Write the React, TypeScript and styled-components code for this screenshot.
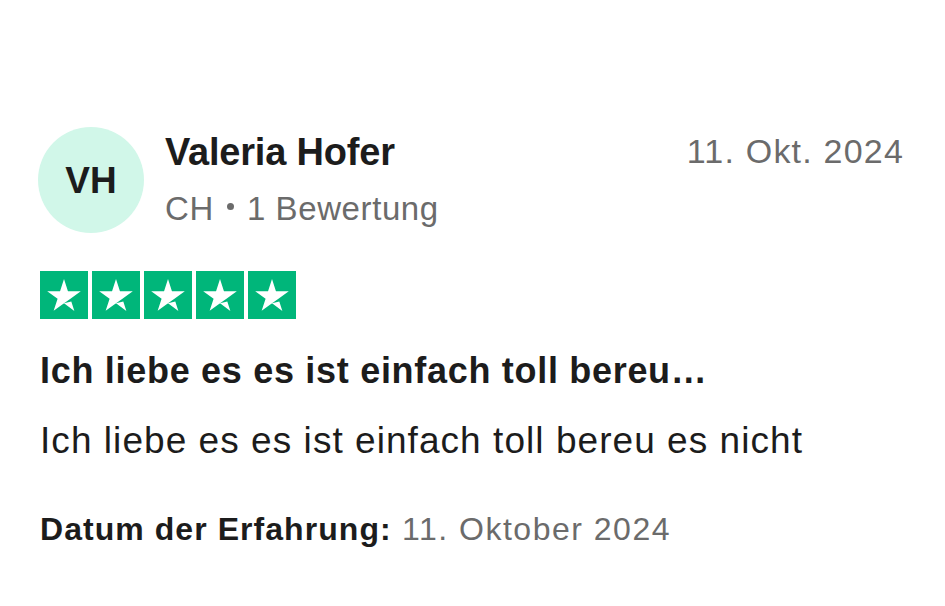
import React from "react";
import styled, { createGlobalStyle } from "styled-components";

const GlobalStyle = createGlobalStyle`
  html, body {
    margin: 0;
    padding: 0;
    background: #ffffff;
  }
  body {
    font-family: "Liberation Sans", Arial, Helvetica, sans-serif;
    color: #1c1c1c;
  }
`;

const ReviewCard = styled.article`
  width: 945px;
  height: 606px;
  box-sizing: border-box;
  padding: 127px 41px 0 40px;
  display: flex;
  flex-direction: column;
`;

const Header = styled.header`
  display: flex;
  align-items: flex-start;
`;

const Avatar = styled.div`
  width: 106px;
  height: 106px;
  margin-left: -2px;
  border-radius: 50%;
  background: #d1f7e9;
  display: flex;
  align-items: center;
  justify-content: center;
  font-size: 37px;
  font-weight: 700;
  line-height: 1;
  color: #1c1c1c;
  flex-shrink: 0;
`;

const Consumer = styled.div`
  display: flex;
  flex-direction: column;
  gap: 21px;
  margin: 6px 0 0 21px;
  flex: 1;
`;

const Name = styled.div`
  font-size: 38px;
  font-weight: 700;
  line-height: 1;
  letter-spacing: -0.2px;
`;

const Meta = styled.div`
  display: flex;
  align-items: center;
  font-size: 33px;
  line-height: 1;
  color: #6b6b6b;
  letter-spacing: 0.6px;
`;

const Dot = styled.span`
  display: inline-block;
  width: 7px;
  height: 7px;
  border-radius: 50%;
  background: #6b6b6b;
  margin: 0 13px 5px 13px;
`;

const PublishedDate = styled.time`
  margin-top: 7px;
  font-size: 34px;
  line-height: 1;
  color: #6b6b6b;
  letter-spacing: 1.2px;
`;

const Stars = styled.div`
  display: flex;
  gap: 4px;
  margin-top: 38px;
`;

const StarBox = styled.svg`
  width: 48px;
  height: 48px;
  display: block;
`;

const Title = styled.h2`
  margin: 34px 0 0;
  font-size: 36px;
  font-weight: 700;
  line-height: 1;
  letter-spacing: 0.7px;
`;

const Body = styled.p`
  margin: 33px 0 0;
  font-size: 37px;
  line-height: 1;
  letter-spacing: 1.05px;
`;

const Experience = styled.p`
  margin: 54px 0 0;
  font-size: 32px;
  line-height: 1;
  color: #6b6b6b;
  letter-spacing: 1.5px;

  strong {
    color: #1c1c1c;
    font-weight: 700;
    letter-spacing: 1.05px;
  }
`;

const Star = () => (
  <StarBox viewBox="0 0 96 96">
    <path fill="#00b67a" d="M0 0h96v96H0z" />
    <path
      fill="#ffffff"
      d="M48 64.7L62.6 61l6.1 18.8zm33.6-24.3H55.9L48 16.2l-7.9 24.2H14.4l20.8 15-7.9 24.2 20.8-15 12.8-9.2 20.7-15z"
    />
  </StarBox>
);

const App = () => {
  const rating = 5;
  return (
    <>
      <GlobalStyle />
      <ReviewCard>
        <Header>
          <Avatar>VH</Avatar>
          <Consumer>
            <Name>Valeria Hofer</Name>
            <Meta>
              CH<Dot />1 Bewertung
            </Meta>
          </Consumer>
          <PublishedDate>11. Okt. 2024</PublishedDate>
        </Header>
        <Stars>
          {Array.from({ length: rating }).map((_, i) => (
            <Star key={i} />
          ))}
        </Stars>
        <Title>Ich liebe es es ist einfach toll bereu…</Title>
        <Body>Ich liebe es es ist einfach toll bereu es nicht</Body>
        <Experience>
          <strong>Datum der Erfahrung:</strong> 11. Oktober 2024
        </Experience>
      </ReviewCard>
    </>
  );
};

export default App;
